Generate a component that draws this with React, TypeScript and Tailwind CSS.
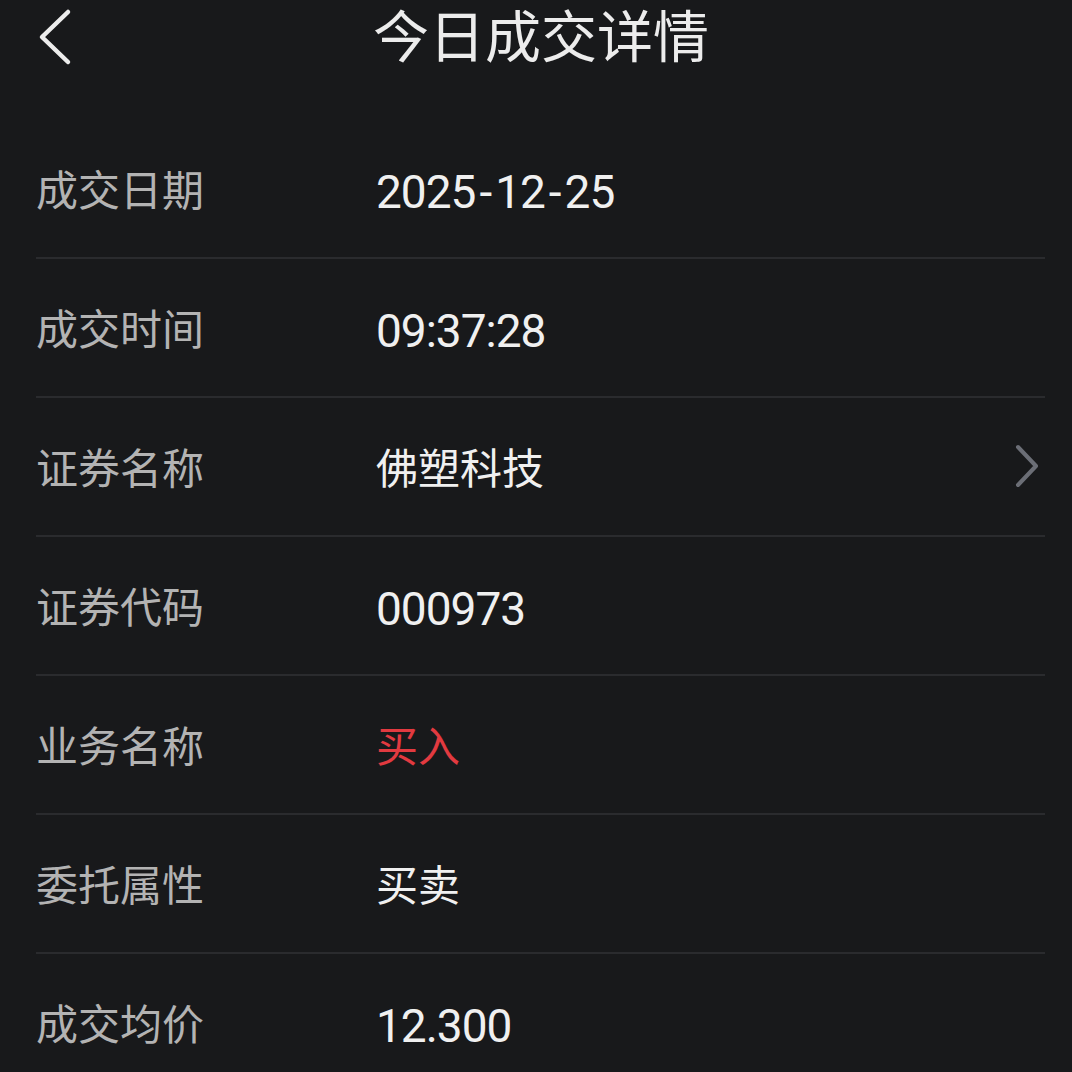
import React from "react";

const rows: { label: string; value: string; red?: boolean; arrow?: boolean; num?: boolean }[] = [
  { label: "成交日期", value: "2025-12-25", num: true },
  { label: "成交时间", value: "09:37:28", num: true },
  { label: "证券名称", value: "佛塑科技", arrow: true },
  { label: "证券代码", value: "000973", num: true },
  { label: "业务名称", value: "买入", red: true },
  { label: "委托属性", value: "买卖" },
  { label: "成交均价", value: "12.300", num: true },
];

const font = { fontFamily: 'Roboto, "Noto Sans CJK SC", sans-serif' };

function NumText({ v }: { v: string }) {
  const parts = v.split("-");
  return (
    <>
      {parts.map((p, i) => (
        <React.Fragment key={i}>
          {i > 0 && <span className="px-[4px]">-</span>}
          {p}
        </React.Fragment>
      ))}
    </>
  );
}

export default function App() {
  return (
    <div className="w-[1072px] h-[1072px] overflow-hidden bg-[#18191b]" style={font}>
      <div className="relative h-[120px]">
        <svg className="absolute left-[34px] top-[8px]" width="40" height="58" viewBox="0 0 40 58" fill="none">
          <path d="M34 4 L8 29 L34 54" stroke="#ececec" strokeWidth="4.5" strokeLinecap="round" strokeLinejoin="round" />
        </svg>
        <div className="text-center text-[56px] leading-[76px] text-[#ececec] pl-[10px]">今日成交详情</div>
      </div>
      <div className="pl-[36px] pr-[27px]">
        {rows.map((r) => (
          <div key={r.label} className="flex h-[139px] items-center border-b-2 border-[#2a2b2e] pt-[6px]">
            <div className="w-[340px] text-[42px] text-[#b3b3b3] leading-none">{r.label}</div>
            {r.num ? (
              <div className="flex-1 text-[46px] tracking-[-1px] leading-none text-[#f0f0f0]">
                <NumText v={r.value} />
              </div>
            ) : (
              <div className={`flex-1 text-[42px] leading-none ${r.red ? "text-[#e23a40]" : "text-[#f0f0f0]"}`}>{r.value}</div>
            )}
            {r.arrow && (
              <svg className="mr-[4px] -mt-[8px]" width="28" height="44" viewBox="0 0 28 44" fill="none">
                <path d="M5 3 L23 22 L5 41" stroke="#6b6e76" strokeWidth="4" strokeLinecap="round" strokeLinejoin="round" />
              </svg>
            )}
          </div>
        ))}
      </div>
    </div>
  );
}
